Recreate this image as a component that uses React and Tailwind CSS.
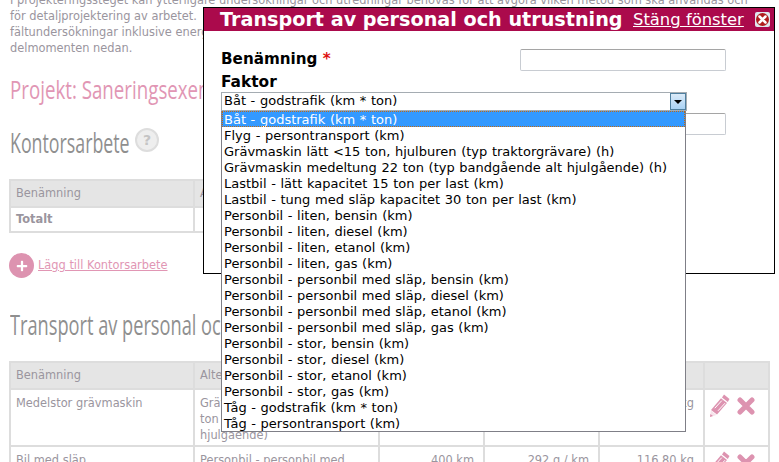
import { FaPlus } from "react-icons/fa";

const options = [
  "Båt - godstrafik (km * ton)",
  "Flyg - persontransport (km)",
  "Grävmaskin lätt <15 ton, hjulburen (typ traktorgrävare) (h)",
  "Grävmaskin medeltung 22 ton (typ bandgående alt hjulgående) (h)",
  "Lastbil - lätt kapacitet 15 ton per last (km)",
  "Lastbil - tung med släp kapacitet 30 ton per last (km)",
  "Personbil - liten, bensin (km)",
  "Personbil - liten, diesel (km)",
  "Personbil - liten, etanol (km)",
  "Personbil - liten, gas (km)",
  "Personbil - personbil med släp, bensin (km)",
  "Personbil - personbil med släp, diesel (km)",
  "Personbil - personbil med släp, etanol (km)",
  "Personbil - personbil med släp, gas (km)",
  "Personbil - stor, bensin (km)",
  "Personbil - stor, diesel (km)",
  "Personbil - stor, etanol (km)",
  "Personbil - stor, gas (km)",
  "Tåg - godstrafik (km * ton)",
  "Tåg - persontransport (km)",
];

const font = "font-['DejaVu_Sans','Liberation_Sans',sans-serif]";
const cell = "border-2 border-[#dddddd] px-[5px]";

function Heading({ children, className }) {
  return (
    <h2
      className={`origin-left whitespace-nowrap font-['Open_Sans',sans-serif] ${className}`}
    >
      {children}
    </h2>
  );
}

function PencilIcon() {
  return (
    <svg viewBox="0 0 20 23" className="h-[23px] w-[20px]">
      <path d="M14 0.5 L19.5 5 L17.8 8 L12 3.4 Z" fill="#dd93b0" />
      <path d="M11 4.2 L17 9 L7 20.5 L1 16 Z" fill="#dd93b0" />
      <path d="M4.8 14.2 L11.8 6.6 M8 16.8 L15 9.2" stroke="#ffffff" strokeWidth="1" />
      <path d="M0.8 16.4 L6.4 21 L0 23 Z" fill="#f7e3eb" />
      <path d="M0.4 20 L3 22 L0 23 Z" fill="#dd93b0" />
    </svg>
  );
}

function CrossIcon({ className, color }) {
  return (
    <svg viewBox="0 0 18 18" className={className}>
      <path d="M3 3 L15 15 M15 3 L3 15" stroke={color} strokeWidth="5" strokeLinecap="round" />
    </svg>
  );
}

function Actions() {
  return (
    <td className={`${cell} align-top`}>
      <div className="mt-[4px] flex items-center gap-[7px]">
        <PencilIcon />
        <CrossIcon className="h-[18px] w-[18px]" color="#dd93b0" />
      </div>
    </td>
  );
}

function Columns() {
  return (
    <colgroup>
      <col className="w-[184px]" />
      <col className="w-[185px]" />
      <col className="w-[105px]" />
      <col className="w-[115px]" />
      <col className="w-[105px]" />
      <col className="w-[65px]" />
    </colgroup>
  );
}

function HeadRow() {
  return (
    <tr className="h-[27px] bg-[#e5e5e5]">
      <td className={cell}>Benämning</td>
      <td className={cell}>Alternativ</td>
      <td className={cell}></td>
      <td className={cell}></td>
      <td className={cell}></td>
      <td className={cell}></td>
    </tr>
  );
}

export default function App() {
  return (
    <div className={`relative h-[462px] w-[779px] overflow-hidden bg-white ${font}`}>
      {/* PAGE BEHIND THE MODAL */}
      <main className="-mt-[8px] pl-[10px] text-[11.4px] text-[#9a959e]">
        <p className="whitespace-nowrap leading-[16px]">
          I projekteringssteget kan ytterligare undersökningar och utredningar behövas för att avgöra vilken metod som ska användas och
          <br />
          för detaljprojektering av arbetet.
          <br />
          fältundersökningar inklusive energianalyser
          <br />
          delmomenten nedan.
        </p>

        <Heading className="mt-[16px] h-[34px] scale-x-[0.72] text-[26px] leading-[34px] text-[#e196b4]">
          Projekt: Saneringsexempel
        </Heading>

        <div className="mt-[18px] flex h-[36px] items-center">
          <Heading className="w-[125px] scale-x-[0.635] text-[28px] leading-[36px] text-[#8f8f8f]">
            Kontorsarbete
          </Heading>
          <span className="mb-[4px] flex h-[24px] w-[24px] items-center justify-center rounded-full border-2 border-[#dddddd] bg-[#eeeeee] text-[14px] font-bold text-[#c4c4c4]">
            ?
          </span>
        </div>

        <table className="mt-[19px] -ml-[1px] table-fixed border-collapse">
          <Columns />
          <tbody>
            <HeadRow />
            <tr className="h-[25px]">
              <td className={`${cell} font-bold`}>Totalt</td>
              <td className={cell}></td>
              <td className={cell}></td>
              <td className={cell}></td>
              <td className={cell}></td>
              <td className={cell}></td>
            </tr>
          </tbody>
        </table>

        <div className="mt-[20px] -ml-[1px] flex items-center gap-[4px]">
          <span className="flex h-[25px] w-[25px] items-center justify-center rounded-full bg-[#dd93b0] text-white">
            <FaPlus className="h-[12px] w-[12px]" />
          </span>
          <a className="text-[#e196b4] underline">Lägg till Kontorsarbete</a>
        </div>

        <Heading className="mt-[28px] h-[36px] scale-x-[0.65] text-[28px] leading-[36px] text-[#8f8f8f]">
          Transport av personal och utrustning
        </Heading>

        <table className="mt-[19px] -ml-[1px] table-fixed border-collapse">
          <Columns />
          <tbody>
            <HeadRow />
            <tr className="h-[57px] leading-[16px]">
              <td className={`${cell} pt-[5px] align-top`}>Medelstor grävmaskin</td>
              <td className={`${cell} pt-[5px] align-top`}>
                Grävmaskin medeltung 22 ton (typ bandgående alt hjulgående)
              </td>
              <td className={cell}></td>
              <td className={cell}></td>
              <td className={`${cell} pt-[5px] pr-[9px] text-right align-top`}>1 240,00 kg</td>
              <Actions />
            </tr>
            <tr className="leading-[16px]">
              <td className={`${cell} pt-[5px] align-top`}>Bil med släp</td>
              <td className={`${cell} pt-[5px] align-top`}>
                Personbil - personbil med släp, diesel
              </td>
              <td className={`${cell} pt-[5px] pr-[9px] text-right align-top`}>400 km</td>
              <td className={`${cell} pt-[5px] pr-[9px] text-right align-top`}>292 g / km</td>
              <td className={`${cell} pt-[5px] pr-[9px] text-right align-top`}>116,80 kg</td>
              <Actions />
            </tr>
          </tbody>
        </table>
      </main>

      {/* MODAL */}
      <section className="absolute left-[203px] top-[7px] h-[267px] w-[572px] border border-black bg-white">
        <header className="flex h-[23px] items-center bg-[#ab0a4c] pl-[16px] text-white">
          <h1 className="w-[413px] whitespace-nowrap text-[19.2px] font-bold leading-[23px]">
            Transport av personal och utrustning
          </h1>
          <a className="whitespace-nowrap text-[16.4px] leading-[23px] underline">Stäng fönster</a>
          <span className="ml-[11px] flex h-[15px] w-[15px] items-center justify-center rounded-[2px] bg-[#dfe8ee]">
            <span className="flex h-[13px] w-[13px] items-center justify-center rounded-full bg-[#b01c1c]">
              <CrossIcon className="h-[9px] w-[9px]" color="#ffffff" />
            </span>
          </span>
        </header>

        <div className="relative pl-[17px] text-black">
          <div className="mt-[18px] flex h-[22px] items-center justify-between pr-[48px]">
            <label className="-mt-[2px] text-[15.2px] font-bold">
              Benämning <span className="text-[#dd1111]">*</span>
            </label>
            <input className="h-[22px] w-[206px] rounded-[2px] border border-[#c8ccd2] border-t-[#a5a5a5]" />
          </div>
          <label className="mt-[2px] block h-[19px] text-[15.4px] font-bold leading-[19px]">
            Faktor
          </label>
          <div className="flex h-[19px] w-[466px] items-center justify-between border border-[#a5acb2] pl-[2px] text-[13px] [word-spacing:0.5px]">
            <span className="-mt-[2px]">{options[0]}</span>
            <span className="flex h-[17px] w-[16px] items-center justify-center border border-[#4f7f9f] bg-gradient-to-b from-[#dbeaf8] to-[#a9d3f5]">
              <span className="h-0 w-0 border-x-[4px] border-t-[4px] border-x-transparent border-t-black"></span>
            </span>
          </div>
          <input className="absolute right-[48px] top-[64px] h-[22px] w-[206px] rounded-[2px] border border-[#c8ccd2] border-t-[#a5a5a5]" />
        </div>
      </section>

      {/* OPEN SELECT LIST */}
      <ul className="absolute left-[221px] top-[111px] w-[465px] border border-[#7f7f87] border-t-0 bg-white text-[13px] text-black [word-spacing:0.5px]">
        {options.map((opt, i) => (
          <li
            key={opt}
            className={`h-[16px] whitespace-nowrap pl-[2px] leading-[17px] ${
              i === 0 ? "bg-[#3399ff] text-white outline-1 -outline-offset-1 outline-dotted outline-[#c46a10]" : ""
            }`}
          >
            {opt}
          </li>
        ))}
      </ul>
    </div>
  );
}
